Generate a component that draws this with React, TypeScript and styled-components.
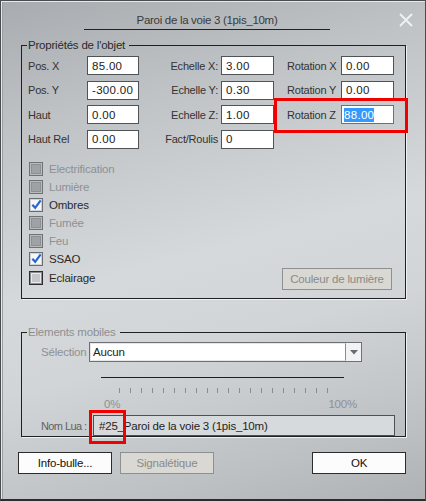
import React from "react";
import styled, { createGlobalStyle, css } from "styled-components";

const Global = createGlobalStyle`
  html, body { margin: 0; padding: 0; }
  body { width: 426px; height: 501px; overflow: hidden; font-family: "Liberation Sans", Arial, sans-serif; font-size: 11px; letter-spacing: -0.2px; }
`;

const Dialog = styled.div`
  position: relative;
  box-sizing: border-box;
  width: 426px;
  height: 501px;
  border: 1px solid #4a4d50;
  border-bottom: 2px solid #2a2c2e;
  box-shadow: inset 1px 1px 0 #e6e8ea, inset 2px 0 0 #9a9ea2;
  background: linear-gradient(165deg, #a8acb0 0%, #bfc3c6 22%, #d6d9db 50%, #d2d5d7 65%, #bcc0c3 88%, #aeb2b5 100%);
  padding: 0 19px 0 19px;
  display: flex;
  flex-direction: column;
  color: #2a2a2a;
`;

const TitleBar = styled.div`
  height: 37px;
  flex: none;
  display: grid;
  grid-template-columns: 1fr auto 1fr;
  align-items: start;
`;

const TitleText = styled.div`
  grid-column: 2;
  margin-top: 13px;
  width: 246px;
  text-align: center;
  font-size: 11.5px;
  letter-spacing: -0.3px;
  color: #3a3a3a;
  padding-bottom: 3px;
  border-bottom: 1px solid #222;
  margin-left: -12px;
`;

const Close = styled.div`
  grid-column: 3;
  justify-self: end;
  margin-top: 12px;
  margin-right: -7px;
  width: 14px;
  height: 14px;
`;

const Group = styled.fieldset<{ $h: number }>`
  box-sizing: border-box;
  margin: 0 0 0 1px;
  height: ${(p) => p.$h}px;
  flex: none;
  border: 1px solid #1e2022;
  box-shadow: 1px 1px 0 #eef0f1;
  padding: 0 6px 0 6px;
  position: relative;
`;

const Legend = styled.legend<{ $disabled?: boolean }>`
  padding: 0 4px 0 1px;
  margin-left: -1px;
  font-size: 11.5px;
  line-height: 14px;
  color: ${(p) => (p.$disabled ? "#8c8f92" : "#2a2a2a")};
`;

const FieldGrid = styled.div`
  display: grid;
  grid-template-columns: 59px 52px 82px 53px 67px 53px;
  grid-auto-rows: 19px;
  row-gap: 5.6px;
  margin-top: 4px;
  align-items: center;
`;

const Label = styled.span<{ $align?: "left" | "right"; $pad?: number }>`
  text-align: ${(p) => p.$align || "left"};
  padding-right: ${(p) => (p.$align === "right" ? 3 : 0)}px;
  padding-left: ${(p) => p.$pad || 0}px;
  color: #333;
  white-space: nowrap;
`;

const Input = styled.div<{ $focus?: boolean }>`
  box-sizing: border-box;
  height: 19px;
  background: #fff;
  border: 1px solid ${(p) => (p.$focus ? "#3c7fb1" : "#505355")};
  padding: 0 0 0 4px;
  display: flex;
  align-items: center;
  color: #222;
  font-size: 11.5px;
  letter-spacing: 0.3px;
`;

const Selected = styled.span`
  background: #3399ff;
  color: #fff;
  margin-left: -2px;
  padding: 1px 0;
`;

const CheckList = styled.div`
  display: flex;
  flex-direction: column;
  gap: 5px;
  margin-top: 14px;
  margin-left: 1px;
`;

const CheckRow = styled.div<{ $disabled?: boolean; $extra?: number }>`
  display: flex;
  align-items: center;
  height: 13px;
  gap: 6px;
  font-size: 11.5px;
  margin-top: ${(p) => p.$extra || 0}px;
  color: ${(p) => (p.$disabled ? "#8e9194" : "#2a2a2a")};
`;

const Box = styled.div<{ $state: "disabled" | "checked" | "empty" }>`
  box-sizing: border-box;
  width: 14px;
  height: 14px;
  display: flex;
  align-items: center;
  justify-content: center;
  ${(p) =>
    p.$state === "disabled"
      ? css`
          border: 1px solid #6f7274;
          background: #9fa2a4;
          box-shadow: inset 0 0 0 1px #b8babc, inset 0 0 0 2px #8e9193;
        `
      : p.$state === "checked"
      ? css`
          border: 1px solid #6b6e70;
          background: #f4f6f8;
          box-shadow: inset 0 0 0 1px #d0d3d6;
        `
      : css`
          border: 1px solid #2c2e30;
          background: #c4c7c9;
          box-shadow: inset 0 0 0 1px #8a8d90, inset 0 0 0 2px #e8eaeb;
        `}
`;

const LightRow = styled.div`
  display: flex;
  justify-content: flex-end;
  margin-top: -17px;
  margin-right: 7px;
`;

const Button = styled.div<{ $disabled?: boolean; $w?: number }>`
  box-sizing: border-box;
  width: ${(p) => p.$w || 94}px;
  height: 22px;
  display: flex;
  align-items: center;
  justify-content: center;
  font-size: 11.5px;
  ${(p) =>
    p.$disabled
      ? css`
          background: #d9d8d3;
          border: 1px solid #8d8f91;
          color: #8a8a8a;
        `
      : css`
          background: #fcfcfc;
          border: 1px solid #2a2c2e;
          color: #111;
        `}
`;

const Spacer = styled.div<{ $h: number }>`
  height: ${(p) => p.$h}px;
  flex: none;
`;

const MobileBody = styled.div`
  display: flex;
  flex-direction: column;
  padding-left: 13px;
`;

const SelRow = styled.div`
  display: flex;
  align-items: center;
  margin-top: 3px;
`;

const DimLabel = styled.span<{ $w: number }>`
  width: ${(p) => p.$w}px;
  flex: none;
  font-size: 11.5px;
  color: #8e9194;
  white-space: nowrap;
`;

const Combo = styled.div`
  box-sizing: border-box;
  width: 273px;
  height: 20px;
  display: flex;
  border: 1px solid #6e7173;
  background: #fff;
`;

const ComboText = styled.div`
  flex: 1;
  display: flex;
  align-items: center;
  padding-left: 2px;
  color: #222;
  font-size: 11.5px;
  border: 1px solid #e6e6e6;
  border-right: 1px solid #8a8d90;
`;

const ComboBtn = styled.div`
  width: 15px;
  background: #f2f3f4;
  display: flex;
  align-items: center;
  justify-content: center;
`;

const Slider = styled.div`
  margin-left: 60px;
  width: 243px;
  display: flex;
  flex-direction: column;
  margin-top: 15px;
`;

const Track = styled.div`
  height: 1px;
  background: #1e1e1e;
`;

const Ticks = styled.div`
  display: flex;
  justify-content: space-between;
  margin: 10px 16px 0 18px;
  height: 5px;
`;

const Tick = styled.div`
  width: 1px;
  height: 5px;
  background: #8a8d90;
`;

const TickLabels = styled.div`
  display: flex;
  justify-content: space-between;
  color: #8e9194;
  margin-top: 5px;
  margin-left: 3px;
  margin-right: -13px;
  font-size: 11.5px;
`;

const LuaRow = styled.div`
  display: flex;
  align-items: center;
  margin-top: 5px;
`;

const LuaLabel = styled.span`
  width: 52px;
  flex: none;
  font-size: 11px;
  letter-spacing: -0.6px;
  color: #5e6164;
  white-space: nowrap;
`;

const LuaField = styled.div`
  box-sizing: border-box;
  width: 302px;
  height: 21px;
  border: 1px solid #4e5153;
  background: #d7dadc;
  padding-left: 5px;
  display: flex;
  align-items: center;
  font-size: 11.5px;
  color: #1e1e1e;
`;

const Footer = styled.div`
  display: flex;
  gap: 8px;
  margin-top: 15px;
  margin-left: -2px;
`;

const Push = styled.div`
  flex: 1;
`;

const Annotation = styled.div<{ $x: number; $y: number; $w: number; $h: number }>`
  position: absolute;
  left: ${(p) => p.$x}px;
  top: ${(p) => p.$y}px;
  width: ${(p) => p.$w}px;
  height: ${(p) => p.$h}px;
  box-sizing: border-box;
  border: 3px solid #f20000;
  pointer-events: none;
`;

const CheckIcon = () => (
  <svg width="11" height="11" viewBox="0 0 10 10" style={{ marginTop: -1 }}>
    <path d="M1.2 5.2 L3.8 8 L8.8 1.2" fill="none" stroke="#2a64d0" strokeWidth="2" />
  </svg>
);

const checks: { t: string; s: "disabled" | "checked" | "empty" }[] = [
  { t: "Electrification", s: "disabled" },
  { t: "Lumière", s: "disabled" },
  { t: "Ombres", s: "checked" },
  { t: "Fumée", s: "disabled" },
  { t: "Feu", s: "disabled" },
  { t: "SSAO", s: "checked" },
  { t: "Eclairage", s: "empty" },
];

export default function App() {
  const rows = [
    ["Pos. X", "85.00", "Echelle X:", "3.00", "Rotation X", "0.00"],
    ["Pos. Y", "-300.00", "Echelle Y:", "0.30", "Rotation Y", "0.00"],
    ["Haut", "0.00", "Echelle Z:", "1.00", "Rotation Z", "88.00"],
    ["Haut Rel", "0.00", "Fact/Roulis", "0", "", ""],
  ];
  return (
    <>
      <Global />
      <Dialog>
        <TitleBar>
          <TitleText>Paroi de la voie 3 (1pis_10m)</TitleText>
          <Close>
            <svg width="14" height="14" viewBox="0 0 14 14">
              <path d="M1 1 L13 13 M13 1 L1 13" stroke="#eef0f2" strokeWidth="2" />
            </svg>
          </Close>
        </TitleBar>
        <Group $h={261}>
          <Legend>Propriétés de l'objet</Legend>
          <FieldGrid>
            {rows.map((r, i) => (
              <React.Fragment key={i}>
                <Label>{r[0]}</Label>
                <Input>{r[1]}</Input>
                <Label $align="right">{r[2]}</Label>
                <Input>{r[3]}</Input>
                {r[4] ? <Label $pad={13}>{r[4]}</Label> : <span />}
                {r[5] ? (
                  i === 2 ? (
                    <Input $focus>
                      <Selected>{r[5]}</Selected>
                    </Input>
                  ) : (
                    <Input>{r[5]}</Input>
                  )
                ) : (
                  <span />
                )}
              </React.Fragment>
            ))}
          </FieldGrid>
          <CheckList>
            {checks.map((c, i) => (
              <CheckRow key={c.t} $disabled={c.s === "disabled"} $extra={i === 6 ? 1 : 0}>
                <Box $state={c.s}>{c.s === "checked" && <CheckIcon />}</Box>
                <span>{c.t}</span>
              </CheckRow>
            ))}
          </CheckList>
          <LightRow>
            <Button $disabled $w={110}>
              Couleur de lumière
            </Button>
          </LightRow>
        </Group>
        <Spacer $h={26} />
        <Group $h={112}>
          <Legend $disabled>Elements mobiles</Legend>
          <MobileBody>
            <SelRow>
              <DimLabel $w={48}>Sélection</DimLabel>
              <Combo>
                <ComboText>Aucun</ComboText>
                <ComboBtn>
                  <svg width="8" height="5" viewBox="0 0 8 5">
                    <path d="M0 0 H8 L4 4.5 Z" fill="#6a6d70" />
                  </svg>
                </ComboBtn>
              </Combo>
            </SelRow>
            <Slider>
              <Track />
              <Ticks>
                {Array.from({ length: 20 }).map((_, i) => (
                  <Tick key={i} />
                ))}
              </Ticks>
              <TickLabels>
                <span>0%</span>
                <span>100%</span>
              </TickLabels>
            </Slider>
            <LuaRow>
              <LuaLabel>Nom Lua :</LuaLabel>
              <LuaField>#25_Paroi de la voie 3 (1pis_10m)</LuaField>
            </LuaRow>
          </MobileBody>
        </Group>
        <Footer>
          <Button>Info-bulle...</Button>
          <Button $disabled>Signalétique</Button>
          <Push />
          <Button>OK</Button>
        </Footer>
        <Annotation $x={273} $y={97} $w={134} $h={35} />
        <Annotation $x={88} $y={409} $w={37} $h={34} />
      </Dialog>
    </>
  );
}
